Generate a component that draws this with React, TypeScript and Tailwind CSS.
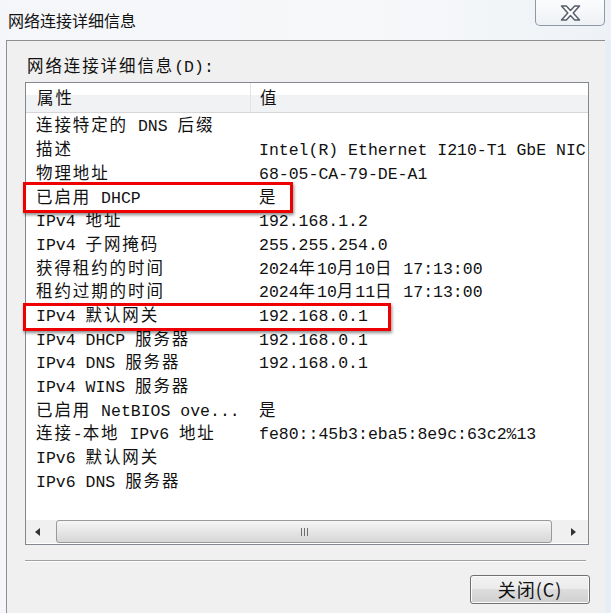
import React from "react"

const rows: [string, string][] = [
  ["连接特定的 DNS 后缀", ""],
  ["描述", "Intel(R) Ethernet I210-T1 GbE NIC"],
  ["物理地址", "68-05-CA-79-DE-A1"],
  ["已启用 DHCP", "是"],
  ["IPv4 地址", "192.168.1.2"],
  ["IPv4 子网掩码", "255.255.254.0"],
  ["获得租约的时间", "2024年10月10日 17:13:00"],
  ["租约过期的时间", "2024年10月11日 17:13:00"],
  ["IPv4 默认网关", "192.168.0.1"],
  ["IPv4 DHCP 服务器", "192.168.0.1"],
  ["IPv4 DNS 服务器", "192.168.0.1"],
  ["IPv4 WINS 服务器", ""],
  ["已启用 NetBIOS ove...", "是"],
  ["连接-本地 IPv6 地址", "fe80::45b3:eba5:8e9c:63c2%13"],
  ["IPv6 默认网关", ""],
  ["IPv6 DNS 服务器", ""],
]

// CJK runs get a bit of extra spacing so they sit on the same grid as the old dialog font
function Mixed({ text }: { text: string }) {
  const parts = text.split(/([\u3400-\u9fff]+)/)
  return (
    <>
      {parts.map((p, i) =>
        /[\u3400-\u9fff]/.test(p) ? (
          <span key={i} className="tracking-[1.9px]">
            {p}
          </span>
        ) : (
          <React.Fragment key={i}>{p}</React.Fragment>
        ),
      )}
    </>
  )
}

function CloseGlyph() {
  return (
    <svg width="21" height="16" viewBox="0 0 21 16">
      <path
        d="M1.5 1 L6.3 1 L10.5 5.4 L14.7 1 L19.5 1 L13.2 8 L19.5 15 L14.7 15 L10.5 10.6 L6.3 15 L1.5 15 L7.8 8 Z"
        fill="#ffffff"
        stroke="#555e6b"
        strokeWidth="1.5"
        strokeLinejoin="round"
      />
    </svg>
  )
}

function Arrow({ dir }: { dir: "left" | "right" }) {
  return (
    <svg width="5" height="8" viewBox="0 0 5 8">
      {dir === "left" ? (
        <path d="M5 0 L0 4 L5 8 Z" fill="#333" />
      ) : (
        <path d="M0 0 L5 4 L0 8 Z" fill="#333" />
      )}
    </svg>
  )
}

function ScrollBar() {
  return (
    <div className="flex h-[23px] mb-[1px] items-stretch bg-[#f0f0f0]">
      <div className="flex w-[22px] items-center justify-center">
        <Arrow dir="left" />
      </div>
      <div className="flex flex-1 items-stretch pl-[8px] pr-[6px]">
        <div className="flex w-[496px] items-center justify-center gap-[2px] rounded-[3px] border border-[#9a9a9a] bg-[linear-gradient(#f6f6f6,#e6e6e6_50%,#d6d6d6)]">
          <div className="h-[8px] w-[1px] bg-[#6f6f6f]" />
          <div className="h-[8px] w-[1px] bg-[#6f6f6f]" />
          <div className="h-[8px] w-[1px] bg-[#6f6f6f]" />
        </div>
      </div>
      <div className="flex w-[30px] items-center justify-center">
        <Arrow dir="right" />
      </div>
    </div>
  )
}

function DetailsList() {
  return (
    <div className="relative ml-[18px] w-[564px]">
      <div className="flex h-[463px] flex-col overflow-hidden border border-[#828790] bg-white font-['Liberation_Mono','Noto_Sans_Mono_CJK_SC','Noto_Sans_CJK_SC',monospace] text-[16.5px] text-[#111]">
        <div className="flex h-[30px] shrink-0 items-center border-b border-[#d6d6d6] bg-[linear-gradient(#ffffff_0,#ffffff_42%,#f1f2f4_42%,#f1f2f4_100%)]">
          <div className="w-[224px] shrink-0 pl-[11px] pt-[5px]">
            <Mixed text="属性" />
          </div>
          <div className="h-full w-[1px] bg-[#e2e3e5]" />
          <div className="pl-[9px] pt-[5px]">
            <Mixed text="值" />
          </div>
        </div>
        <div className="flex-1 pt-[3px]">
          {rows.map(([name, value]) => (
            <div key={name} className="flex h-[23.7px] items-center whitespace-pre pl-[10px]">
              <div className="w-[223px] shrink-0">
                <Mixed text={name} />
              </div>
              <div className="whitespace-nowrap">
                <Mixed text={value} />
              </div>
            </div>
          ))}
        </div>
        <ScrollBar />
      </div>
      {/* red annotation boxes */}
      <div className="absolute left-[-2px] top-[100px] h-[31px] w-[270px] border-[3px] border-[#ee0000] shadow-[1px_2px_3px_rgba(0,0,0,0.45)]" />
      <div className="absolute left-[-2px] top-[221px] h-[28px] w-[368px] border-[3px] border-[#ee0000] shadow-[1px_2px_3px_rgba(0,0,0,0.45)]" />
    </div>
  )
}

export default function App() {
  return (
    <div className="flex h-[613px] w-[611px] flex-col overflow-hidden bg-[#f3f5f8]">
      <div className="flex h-[40px] shrink-0 items-start justify-between bg-[linear-gradient(90deg,#f4f6f9,#f7f8fa_60%,#eef2f6)] pr-[6px]">
        <div className="mt-[9px] pl-[8px] font-['Noto_Sans_CJK_SC',sans-serif] text-[16px] leading-[22px] text-[#111]">
          网络连接详细信息
        </div>
        <div className="flex h-[26px] w-[70px] items-center justify-center rounded-b-[5px] border border-t-0 border-[#8f98a5] bg-[linear-gradient(#fbfcfd,#eef1f5)]">
          <CloseGlyph />
        </div>
      </div>
      <div className="flex flex-1">
        <div className="w-[6px] bg-[#f4f6f9]" />
        <div className="flex flex-1 flex-col border-l border-t border-[#909090] bg-[#f0f0f0] pt-[17px]">
          <div className="ml-[20px] h-[20px] font-['Liberation_Mono','Noto_Sans_Mono_CJK_SC','Noto_Sans_CJK_SC',monospace] text-[16.5px] leading-[20px] text-[#111]">
            <Mixed text="网络连接详细信息(D):" />
          </div>
          <div className="mt-[4px]">
            <DetailsList />
          </div>
          <div className="ml-[18px] mt-[15px] w-[561px] border-b border-t border-b-white border-t-[#a0a0a0]" />
          <div className="mr-[15px] mt-[13px] flex justify-end">
            <div className="flex h-[29px] w-[120px] items-center justify-center rounded-[3px] border border-[#707070] bg-[linear-gradient(#f2f2f2,#ebebeb_50%,#dddddd_50%,#cfcfcf)] font-['Noto_Sans_CJK_SC',sans-serif] text-[18px] tracking-[1px] text-[#111] shadow-[inset_0_0_0_1px_#fbfbfb]">
              关闭(C)
            </div>
          </div>
        </div>
        <div className="w-[6px] bg-[#e8eef6]" />
      </div>
    </div>
  )
}
